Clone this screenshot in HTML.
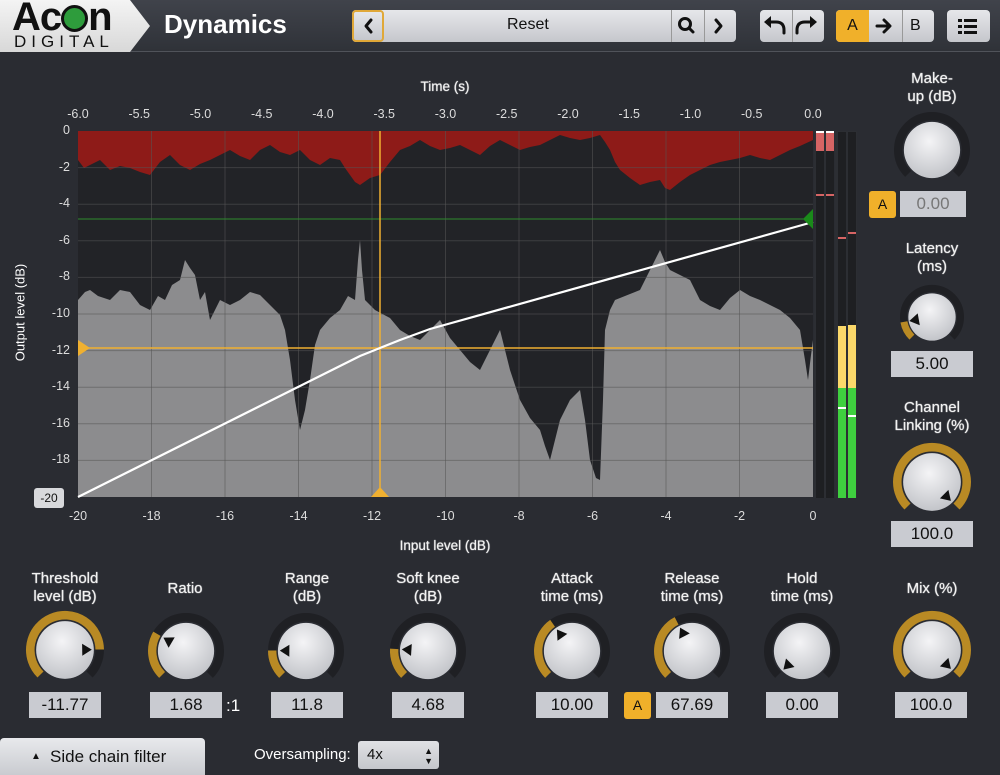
<!DOCTYPE html>
<html><head><meta charset="utf-8"><style>
*{margin:0;padding:0;box-sizing:border-box}
body{width:1000px;height:775px;overflow:hidden;background:#2a2c32;font-family:"Liberation Sans",sans-serif;color:#fff;position:relative}
.hdr{position:absolute;left:0;top:0;width:1000px;height:52px;background:linear-gradient(#40434b,#2f3238);border-bottom:1px solid #50535a}
.logo{position:absolute;left:0;top:0;width:150px;height:52px;background:linear-gradient(#f4f4f4,#d8d8d8);clip-path:polygon(0 0,130px 0,150px 26px,130px 52px,0 52px)}
.t{position:absolute;white-space:nowrap}
.btn{position:absolute;background:linear-gradient(#e6e7ea,#c5c7cc);border-radius:4px;color:#111;font-size:16px;text-align:center}
.lbl{position:absolute;font-size:15px;text-align:center;line-height:18px;color:#f2f2f2;text-shadow:0 0 1px #fff}
.val{position:absolute;background:#c9cbd1;color:#111;font-size:17px;text-align:center;height:26px;line-height:26px;width:72px}
.ax{position:absolute;font-size:12.5px;color:#ddd}
</style></head><body>
<div class="hdr"></div>
<div class="logo"></div>
<div class="t" style="left:12px;top:-5px;font-size:40px;font-weight:bold;color:#111;letter-spacing:-1px">Ac<span style="display:inline-block;width:27px;height:27px;border-radius:50%;background:#2e9c3c;vertical-align:-2px;border:3px solid #111"></span>n</div>
<div class="t" style="left:14px;top:32px;font-size:17px;color:#111;letter-spacing:5px">DIGITAL</div>
<div class="t" style="left:164px;top:9px;font-size:26px;font-weight:bold">Dynamics</div>
<div class="btn" style="left:352px;top:10px;width:384px;height:32px"></div>
<div class="btn" style="left:352px;top:10px;width:32px;height:32px;border:2px solid #e0a838"></div>
<div class="t" style="left:507px;top:16px;font-size:16px;color:#111">Reset</div>
<div class="t" style="left:671px;top:10px;width:1px;height:32px;background:#999"></div>
<div class="t" style="left:704px;top:10px;width:1px;height:32px;background:#999"></div>
<div class="btn" style="left:760px;top:10px;width:64px;height:32px"></div>
<div class="t" style="left:792px;top:10px;width:1px;height:32px;background:#999"></div>
<div class="btn" style="left:836px;top:10px;width:98px;height:32px"></div>
<div class="t" style="left:836px;top:10px;width:33px;height:32px;background:#f0b02a;border-radius:4px 0 0 4px;color:#111;font-size:16px;text-align:center;line-height:32px">A</div>
<div class="t" style="left:902px;top:10px;width:1px;height:32px;background:#999"></div>
<div class="t" style="left:910px;top:17px;font-size:16px;color:#111">B</div>
<div class="btn" style="left:947px;top:10px;width:43px;height:32px"></div>
<svg width="1000" height="52" style="position:absolute;left:0;top:0">
<g fill="none" stroke="#111" stroke-width="3" stroke-linecap="round" stroke-linejoin="round">
<polyline points="371,20 366,26 371,32"/>
<polyline points="716,20 721,26 716,32"/>
<circle cx="685" cy="24" r="5.5"/><line x1="689" y1="28" x2="693" y2="32"/>
<path d="M769,22 L776,22 Q784,22 784,30 L784,33"/><path d="M812,22 L805,22 Q797,22 797,30 L797,33"/>
<line x1="877" y1="26" x2="889" y2="26"/><polyline points="884,20 890,26 884,32"/>
</g>
<polygon points="764,22 771,16 771,28" fill="#111"/><polygon points="817,22 810,16 810,28" fill="#111"/>
<g fill="#111"><rect x="958" y="19" width="4" height="3"/><rect x="964" y="19" width="13" height="3"/><rect x="958" y="25" width="4" height="3"/><rect x="964" y="25" width="13" height="3"/><rect x="958" y="31" width="4" height="3"/><rect x="964" y="31" width="13" height="3"/></g>
</svg>

<div class="lbl" style="left:390px;top:78px;width:110px;font-size:13.5px">Time (s)</div>
<div class="lbl" style="left:370px;top:537px;width:150px;font-size:13.5px">Input level (dB)</div>
<div class="t" style="left:-40px;top:305px;font-size:13px;transform:rotate(-90deg);width:120px;text-align:center">Output level (dB)</div>

<svg width="1000" height="775" style="position:absolute;left:0;top:0" id="g">
<rect x="78" y="131" width="735" height="366" fill="#222327"/>
<polygon fill="#8c8c8e" points="78,497 78,300 85,292 90,290 98,296 110,300 120,290 130,292 140,305 150,310 158,296 165,300 172,285 180,280 185,260 190,268 195,275 200,300 205,292 210,320 220,300 230,305 240,300 250,292 260,295 270,305 280,315 285,330 290,360 295,400 300,430 305,410 310,380 315,345 320,330 330,318 340,310 348,296 355,300 358,260 360,240 362,270 365,300 375,310 390,318 400,330 410,336 420,340 430,330 440,320 450,338 460,350 470,362 480,370 490,350 500,330 510,370 520,400 530,418 540,430 545,446 550,460 555,440 560,420 570,400 580,390 585,420 590,460 596,478 600,480 603,400 605,330 610,310 615,300 630,294 640,290 650,270 660,250 665,262 670,270 680,275 690,280 700,300 710,306 720,310 730,298 740,290 750,296 760,300 770,305 780,310 790,318 800,330 805,360 808,380 811,355 813,340 813,497"/>
<polygon fill="#8e1b18" points="78,131 78,160 84,168 90,165 100,160 110,170 120,166 130,168 140,172 150,175 160,162 170,155 180,165 190,170 200,164 210,160 220,155 230,150 240,156 250,160 260,150 270,145 280,152 290,155 300,150 310,160 320,165 330,158 340,160 345,168 350,175 355,182 360,185 370,178 380,175 390,162 400,150 410,146 420,140 430,146 440,150 450,148 460,145 470,150 480,155 490,146 500,140 510,145 520,150 530,147 540,145 550,140 560,135 570,138 580,140 590,138 600,135 605,142 610,150 615,162 620,170 630,178 640,185 650,182 660,180 665,188 670,190 680,182 690,175 700,170 710,165 720,162 730,160 740,158 750,155 760,158 770,160 780,155 790,150 800,146 813,140 813,131"/>
<g id="grid"></g>
<line x1="78" y1="219" x2="813" y2="219" stroke="#2e8b2e" stroke-width="1"/>
<line x1="78" y1="348" x2="813" y2="348" stroke="#f0b030" stroke-width="1.5"/>
<line x1="380" y1="131" x2="380" y2="497" stroke="#f0b030" stroke-width="1.5"/>
<polyline fill="none" stroke="#fff" stroke-width="2.2" points="78,497 330,371 360,356 380,348 400,340 430,329 813,222"/>
<polygon points="78,340 90,348 78,356" fill="#f0b030"/>
<polygon points="371,497 380,487 389,497" fill="#f0b030"/>
<polygon points="813,209 803,219 813,229" fill="#1a8a1a"/>
<rect x="814" y="131" width="20" height="367" fill="#2c2e33"/>
<rect x="816" y="131" width="8" height="367" fill="#1e1f22"/><rect x="826" y="131" width="8" height="367" fill="#1e1f22"/>
<rect x="816" y="133" width="8" height="18" fill="#d56464"/><rect x="826" y="133" width="8" height="18" fill="#d56464"/>
<rect x="816" y="131" width="8" height="2" fill="#fff"/><rect x="826" y="131" width="8" height="2" fill="#fff"/>
<rect x="816" y="194" width="8" height="2" fill="#d56464"/><rect x="826" y="194" width="8" height="2" fill="#d56464"/>
<rect x="835" y="131" width="22" height="367" fill="#2c2e33"/>
<rect x="838" y="132" width="8" height="366" fill="#1e1f22"/><rect x="848" y="132" width="8" height="366" fill="#1e1f22"/>
<rect x="838" y="326" width="8" height="62" fill="#fbd86a"/><rect x="848" y="325" width="8" height="63" fill="#fbd86a"/>
<rect x="838" y="388" width="8" height="110" fill="#3fcf3f"/><rect x="848" y="388" width="8" height="110" fill="#3fcf3f"/>
<rect x="838" y="407" width="8" height="2" fill="#fff"/><rect x="848" y="415" width="8" height="2" fill="#fff"/>
<rect x="838" y="237" width="8" height="2" fill="#d56464"/><rect x="848" y="232" width="8" height="2" fill="#d56464"/>
<g id="knobs"></g>
</svg>
<div class="t" style="left:34px;top:488px;width:30px;height:20px;background:#d8d9dc;color:#111;font-size:12px;text-align:center;line-height:20px;border-radius:3px">-20</div>
<div id="labels"></div>

<div class="lbl" style="left:15px;top:570px;width:100px">Threshold<br>level (dB)</div>
<div class="lbl" style="left:140px;top:580px;width:90px">Ratio</div>
<div class="lbl" style="left:262px;top:570px;width:90px">Range<br>(dB)</div>
<div class="lbl" style="left:383px;top:570px;width:90px">Soft knee<br>(dB)</div>
<div class="lbl" style="left:522px;top:570px;width:100px">Attack<br>time (ms)</div>
<div class="lbl" style="left:642px;top:570px;width:100px">Release<br>time (ms)</div>
<div class="lbl" style="left:752px;top:570px;width:100px">Hold<br>time (ms)</div>
<div class="lbl" style="left:882px;top:580px;width:100px">Mix (%)</div>
<div class="lbl" style="left:882px;top:70px;width:100px">Make-<br>up (dB)</div>
<div class="lbl" style="left:882px;top:240px;width:100px">Latency<br>(ms)</div>
<div class="lbl" style="left:872px;top:399px;width:120px">Channel<br>Linking (%)</div>

<div class="val" style="left:29px;top:692px">-11.77</div>
<div class="val" style="left:150px;top:692px">1.68</div>
<div class="t" style="left:226px;top:696px;font-size:17px">:1</div>
<div class="val" style="left:271px;top:692px">11.8</div>
<div class="val" style="left:392px;top:692px">4.68</div>
<div class="val" style="left:536px;top:692px">10.00</div>
<div class="t" style="left:624px;top:692px;width:27px;height:27px;background:#f0b02a;border-radius:3px;color:#111;text-align:center;line-height:27px;font-size:14px">A</div>
<div class="val" style="left:656px;top:692px">67.69</div>
<div class="val" style="left:766px;top:692px">0.00</div>
<div class="val" style="left:895px;top:692px">100.0</div>
<div class="t" style="left:869px;top:191px;width:27px;height:27px;background:#f0b02a;border-radius:3px;color:#111;text-align:center;line-height:27px;font-size:14px">A</div>
<div class="val" style="left:900px;top:191px;width:66px;color:#777">0.00</div>
<div class="val" style="left:891px;top:351px;width:82px">5.00</div>
<div class="val" style="left:891px;top:521px;width:82px">100.0</div>

<div class="t" style="left:0;top:738px;width:205px;height:37px;background:linear-gradient(#e8e9ec,#c9cbd0);border-radius:4px 4px 0 0;color:#111;font-size:17px;line-height:37px;padding-left:30px"><span style="font-size:10px;position:absolute;left:31px;top:0">&#9650;</span><span style="margin-left:20px">Side chain filter</span></div>
<div class="t" style="left:254px;top:746px;font-size:15px">Oversampling:</div>
<div class="t" style="left:358px;top:741px;width:81px;height:28px;background:linear-gradient(#e0e1e4,#c5c7cc);border-radius:3px;color:#111;font-size:15px;line-height:28px;padding-left:9px">4x<span style="position:absolute;right:6px;top:0;font-size:9px;line-height:10px;padding-top:5px">&#9650;<br>&#9660;</span></div>

<script>
var g=document.getElementById('grid'),h='';
for(var d=2;d<=18;d+=2){var y=131+d*18.3;h+='<line x1="78" x2="813" y1="'+y+'" y2="'+y+'" stroke="#555" stroke-opacity="0.55" stroke-width="1"/>';}
for(var i=-18;i<=-2;i+=2){var x=813+i*36.75;h+='<line y1="131" y2="497" x1="'+x+'" x2="'+x+'" stroke="#555" stroke-opacity="0.55" stroke-width="1"/>';}
g.innerHTML=h;
var L='';
for(var d=0;d<=18;d+=2){L+='<div class="ax" style="left:50px;width:20px;text-align:right;top:'+(123+d*18.3)+'px">'+(d?'-'+d:'0')+'</div>';}
for(var i=-20;i<=0;i+=2){var x=813+i*36.75;L+='<div class="ax" style="width:30px;text-align:center;left:'+(x-15)+'px;top:509px">'+i+'</div>';}
for(var k=0;k<=12;k++){var t=-6+k*0.5,x=78+k*61.25;L+='<div class="ax" style="width:34px;text-align:center;left:'+(x-17)+'px;top:107px">'+t.toFixed(1)+'</div>';}
document.getElementById('labels').innerHTML=L;
function P(cx,cy,r,a){a=a*Math.PI/180;return (cx+r*Math.cos(a)).toFixed(1)+','+(cy-r*Math.sin(a)).toFixed(1);}
function arc(cx,cy,r,a0,a1,col,w){if(a0-a1<0.5)return '';var lg=(a0-a1)>180?1:0;return '<path d="M'+P(cx,cy,r,a0)+' A'+r+','+r+' 0 '+lg+' 1 '+P(cx,cy,r,a1)+'" fill="none" stroke="'+col+'" stroke-width="'+w+'"/>';}
function knob(cx,cy,R,f,ptr){var r=R*0.74,w=R*0.22,rr=R-w/2,s='';
s+=arc(cx,cy,rr,225,-45,'#1f2024',w);
s+=arc(cx,cy,rr,225,225-270*f,'#b98a24',w);
s+='<defs><radialGradient id="kg'+cx+cy+'" cx="45%" cy="35%" r="70%"><stop offset="0" stop-color="#f4f4f6"/><stop offset="1" stop-color="#bfc1c6"/></radialGradient></defs>';
s+='<circle cx="'+cx+'" cy="'+cy+'" r="'+r+'" fill="url(#kg'+cx+cy+')"/>';
if(ptr){var a=225-270*f,pr=r*0.72,ar=a*Math.PI/180,px=cx+pr*Math.cos(ar),py=cy-pr*Math.sin(ar),t=6;
var ox=Math.cos(ar),oy=-Math.sin(ar),nx=-oy,ny=ox;
s+='<polygon fill="#111" points="'+(px+ox*t).toFixed(1)+','+(py+oy*t).toFixed(1)+' '+(px-ox*t*0.6+nx*t).toFixed(1)+','+(py-oy*t*0.6+ny*t).toFixed(1)+' '+(px-ox*t*0.6-nx*t).toFixed(1)+','+(py-oy*t*0.6-ny*t).toFixed(1)+'"/>';}
return s;}
var K=knob(65,650,39,0.83,1)+knob(186,651,38,0.28,1)+knob(306,651,38,0.17,1)+knob(428,651,38,0.18,1)+knob(572,651,38,0.37,1)+knob(692,651,38,0.40,1)+knob(802,651,38,0.0,1)+knob(932,650,39,1,1)+knob(932,150,38,0,0)+knob(932,317,32,0.13,1)+knob(932,482,39,1,1);
document.getElementById('knobs').innerHTML=K;
</script>
</body></html>
